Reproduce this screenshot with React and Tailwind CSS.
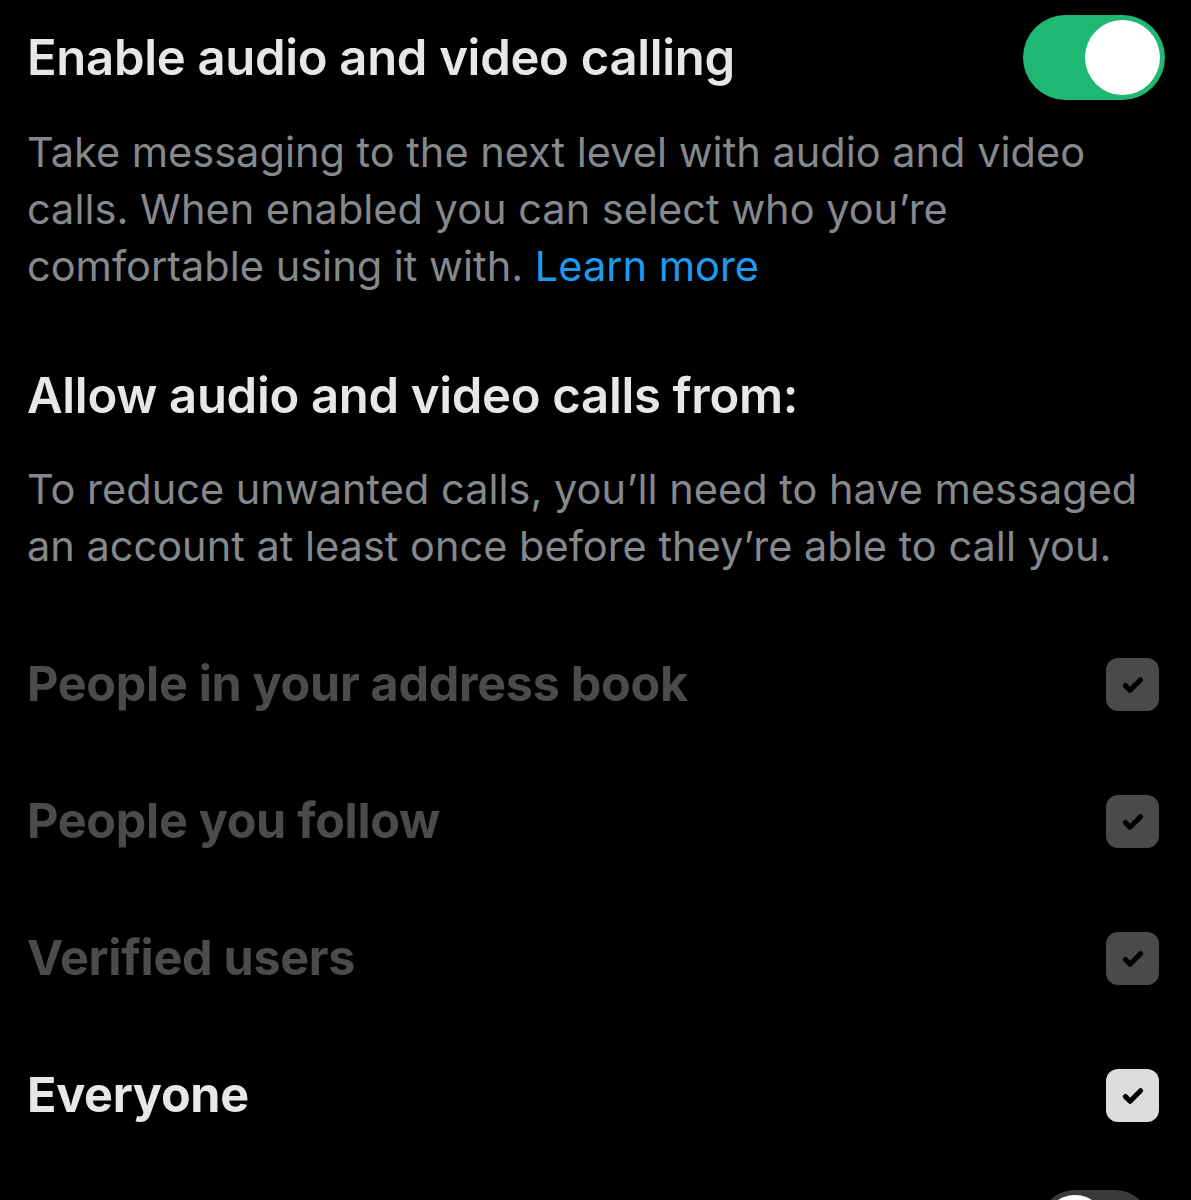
import React from 'react'

const options = [
  { label: 'People in your address book', checked: true, disabled: true },
  { label: 'People you follow', checked: true, disabled: true },
  { label: 'Verified users', checked: true, disabled: true },
  { label: 'Everyone', checked: true, disabled: false },
]

function Toggle({ on, small }) {
  return (
    <div
      className={
        'rounded-full flex items-center shrink-0 ' +
        (small ? 'w-[112px] h-[72px] p-[5px] ' : 'w-[142px] h-[85px] p-[5px] ') +
        (on ? 'bg-[#1fb873] justify-end' : 'bg-[#3a3a3c] justify-start')
      }
    >
      <div className={'rounded-full bg-white ' + (small ? 'w-[62px] h-[62px]' : 'w-[75px] h-[75px]')} />
    </div>
  )
}

function Check({ disabled }) {
  return (
    <div
      className={
        'w-[53px] h-[53px] rounded-[12px] flex items-center justify-center shrink-0 ' +
        (disabled ? 'bg-[#4a4a4a]' : 'bg-[#dcdcdc]')
      }
    >
      <svg className="w-[28px] h-[28px]" viewBox="0 0 24 24" fill="none" stroke="#000" strokeWidth={4.4} strokeLinecap="round" strokeLinejoin="round">
        <path d="M5.5 12.5l4 4L18.5 7.5" />
      </svg>
    </div>
  )
}

export default function App() {
  return (
    <div className="w-[1191px] h-[1200px] overflow-hidden bg-black font-['Inter',sans-serif]">
      <div className="pl-[27px] pr-[26px]">
        <div className="flex items-center justify-between pt-[15px]">
          <h1 className="text-[49px] leading-[85px] font-semibold text-[#e7e7e7] tracking-[-0.3px]">
            Enable audio and video calling
          </h1>
          <Toggle on />
        </div>
        <p className="mt-[24px] text-[41.5px] leading-[57px] text-[#85888c] pr-[60px]">
          Take messaging to the next level with audio and video calls. When enabled you can select who you’re
          comfortable using it with. <span className="text-[#1d9bf0]">Learn more</span>
        </p>

        <h2 className="mt-[71px] text-[49px] leading-[60px] font-semibold text-[#e7e7e7] tracking-[-0.3px]">
          Allow audio and video calls from:
        </h2>
        <p className="mt-[35px] text-[41.5px] leading-[57px] text-[#85888c]">
          To reduce unwanted calls, you’ll need to have messaged an account at least once before they’re able to call you.
        </p>

        <div className="mt-[41px] pr-[6px]">
          {options.map((o) => (
            <div key={o.label} className="h-[137px] flex items-center justify-between">
              <span
                className={
                  'text-[48.5px] font-bold tracking-[-0.3px] ' +
                  (o.disabled ? 'text-[#4b4b4b]' : 'text-[#e7e7e7]')
                }
              >
                {o.label}
              </span>
              <Check disabled={o.disabled} />
            </div>
          ))}
          <div className="h-[137px] flex items-start justify-end pt-[26px] pr-[8px]">
            <Toggle on={false} small />
          </div>
        </div>
      </div>
    </div>
  )
}
